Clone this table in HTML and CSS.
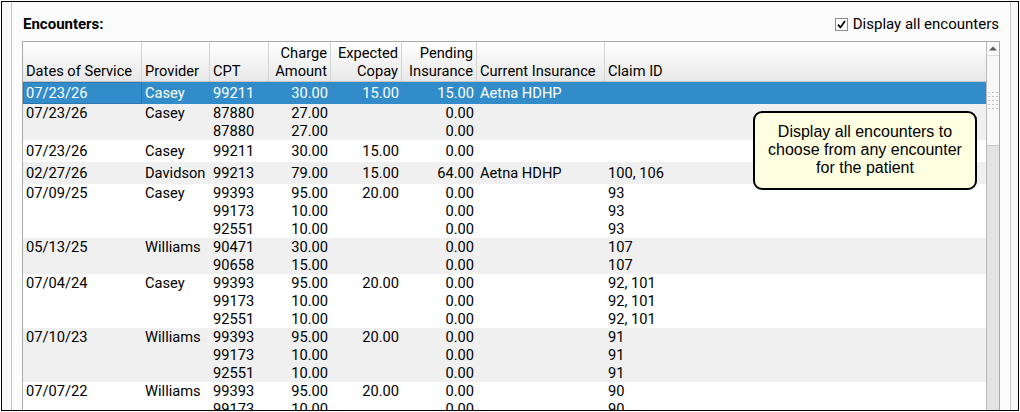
FILE: index.html
```html
<!DOCTYPE html>
<html>
<head>
<meta charset="utf-8">
<link rel="stylesheet" href="styles.css">
</head>
<body>
<div class="frame">
  <div class="gutter-left"></div>
  <div class="panel">
    <div class="toolbar">
      <span class="title">Encounters:</span>
      <label class="check">
        <span class="box"><svg width="11" height="11" viewBox="0 0 11 11"><path d="M2 5.6 L4.4 8.4 L9 2" fill="none" stroke="#000" stroke-width="1.7"/></svg></span>
        <span>Display all encounters</span>
      </label>
    </div>
    <div class="table">
      <div class="grid">
        <div class="head">
          <div class="hc">Dates of Service</div>
          <div class="hc">Provider</div>
          <div class="hc">CPT</div>
          <div class="hc r">Charge<br>Amount</div>
          <div class="hc r">Expected<br>Copay</div>
          <div class="hc r">Pending<br>Insurance</div>
          <div class="hc">Current Insurance</div>
          <div class="hc last">Claim ID</div>
          <div class="hc last"></div>
        </div>
        <div class="body">
          <div class="row one sel">
            <div class="c focus">07/23/26</div><div class="c">Casey</div><div class="c">99211</div><div class="c r">30.00</div><div class="c r">15.00</div><div class="c r">15.00</div><div class="c">Aetna HDHP</div><div class="c"></div><div class="c"></div>
          </div>
          <div class="row">
            <div class="c">07/23/26</div><div class="c">Casey</div><div class="c">87880<br>87880</div><div class="c r">27.00<br>27.00</div><div class="c r"></div><div class="c r">0.00<br>0.00</div><div class="c"></div><div class="c"></div><div class="c"></div>
          </div>
          <div class="row one">
            <div class="c">07/23/26</div><div class="c">Casey</div><div class="c">99211</div><div class="c r">30.00</div><div class="c r">15.00</div><div class="c r">0.00</div><div class="c"></div><div class="c"></div><div class="c"></div>
          </div>
          <div class="row one">
            <div class="c">02/27/26</div><div class="c">Davidson</div><div class="c">99213</div><div class="c r">79.00</div><div class="c r">15.00</div><div class="c r">64.00</div><div class="c">Aetna HDHP</div><div class="c">100, 106</div><div class="c"></div>
          </div>
          <div class="row">
            <div class="c">07/09/25</div><div class="c">Casey</div><div class="c">99393<br>99173<br>92551</div><div class="c r">95.00<br>10.00<br>10.00</div><div class="c r">20.00</div><div class="c r">0.00<br>0.00<br>0.00</div><div class="c"></div><div class="c">93<br>93<br>93</div><div class="c"></div>
          </div>
          <div class="row">
            <div class="c">05/13/25</div><div class="c">Williams</div><div class="c">90471<br>90658</div><div class="c r">30.00<br>15.00</div><div class="c r"></div><div class="c r">0.00<br>0.00</div><div class="c"></div><div class="c">107<br>107</div><div class="c"></div>
          </div>
          <div class="row">
            <div class="c">07/04/24</div><div class="c">Casey</div><div class="c">99393<br>99173<br>92551</div><div class="c r">95.00<br>10.00<br>10.00</div><div class="c r">20.00</div><div class="c r">0.00<br>0.00<br>0.00</div><div class="c"></div><div class="c">92, 101<br>92, 101<br>92, 101</div><div class="c"></div>
          </div>
          <div class="row">
            <div class="c">07/10/23</div><div class="c">Williams</div><div class="c">99393<br>99173<br>92551</div><div class="c r">95.00<br>10.00<br>10.00</div><div class="c r">20.00</div><div class="c r">0.00<br>0.00<br>0.00</div><div class="c"></div><div class="c">91<br>91<br>91</div><div class="c"></div>
          </div>
          <div class="row">
            <div class="c">07/07/22</div><div class="c">Williams</div><div class="c">99393<br>99173<br>92551</div><div class="c r">95.00<br>10.00<br>10.00</div><div class="c r">20.00</div><div class="c r">0.00<br>0.00<br>0.00</div><div class="c"></div><div class="c">90<br>90<br>90</div><div class="c"></div>
          </div>
        </div>
      </div>
      <div class="sb">
        <div class="sb-up"><svg width="8" height="5" viewBox="0 0 8 5"><path d="M0 4.5 L4 0.5 L8 4.5 Z" fill="#5a5a5a"/></svg></div>
        <div class="sb-thumb"><svg width="10" height="18" viewBox="0 0 10 18"><g fill="#c4c4c4"><rect x="0" y="0" width="2" height="1"/><rect x="4" y="0" width="2" height="1"/><rect x="8" y="0" width="2" height="1"/><rect x="0" y="4" width="2" height="1"/><rect x="4" y="4" width="2" height="1"/><rect x="8" y="4" width="2" height="1"/><rect x="0" y="8" width="2" height="1"/><rect x="4" y="8" width="2" height="1"/><rect x="8" y="8" width="2" height="1"/><rect x="0" y="12" width="2" height="1"/><rect x="4" y="12" width="2" height="1"/><rect x="8" y="12" width="2" height="1"/><rect x="0" y="16" width="2" height="1"/><rect x="4" y="16" width="2" height="1"/><rect x="8" y="16" width="2" height="1"/></g></svg></div>
        <div class="sb-track"></div>
      </div>
    </div>
    <div class="callout">Display all encounters to<br>choose from any encounter<br>for the patient</div>
  </div>
  <div class="gutter-right"></div>
</div>
</body>
</html>
```

FILE: styles.css
```css
* { box-sizing: border-box; }
html, body { margin: 0; padding: 0; background: #ffffff; }
body {
  width: 1020px;
  height: 412px;
  overflow: hidden;
  font-family: Roboto, "Noto Sans", sans-serif;
  font-size: 14.67px;
  color: #000;
}
.frame {
  margin: 1px 0 0 1px;
  width: 1018px;
  height: 410px;
  border: 1px solid #000;
  display: flex;
  overflow: hidden;
  background: #f8f8f8;
}
.gutter-left { width: 9px; flex: none; }
.gutter-right { width: 7px; flex: none; }
.panel {
  width: 1000px;
  flex: none;
  border-left: 1px solid #c4c4c4;
  border-right: 1px solid #c4c4c4;
  background: #fcfcfc;
  position: relative;
  display: flex;
  flex-direction: column;
  padding: 0 10px;
}
.toolbar {
  height: 39px;
  flex: none;
  display: flex;
  align-items: center;
  justify-content: space-between;
  padding: 5px 1px 0 1px;
}
.title { font-weight: 700; font-size: 15px; }
.check { display: flex; align-items: center; gap: 5px; font-size: 15px; }
.box {
  width: 13px;
  height: 13px;
  border: 1px solid #8c8c8c;
  background: #fff;
  display: flex;
  align-items: center;
  justify-content: center;
}
.table {
  flex: 1;
  min-height: 0;
  border: 1px solid #a9a9a9;
  border-bottom: none;
  display: flex;
  background: #fff;
}
.grid {
  flex: 1;
  min-width: 0;
  display: flex;
  flex-direction: column;
  overflow: hidden;
}
.head, .row {
  display: grid;
  grid-template-columns: 119px 68px 59px 62px 71px 75px 128px 1fr 0px;
}
.head {
  height: 40px;
  flex: none;
  background: linear-gradient(#ffffff, #e8e8e8);
  border-bottom: 1px solid #c6c6c6;
}
.hc {
  border-right: 1px solid #d3d3d3;
  padding: 0 3px 1px;
  display: flex;
  flex-direction: column;
  justify-content: flex-end;
  line-height: 18px;
  white-space: nowrap;
}
.hc.r { text-align: right; }
.hc.last { border-right: none; }
.row { line-height: 18px; }
.row.one { padding: 2px 0; }
.body .row:nth-child(even) { background: #f0f0f0; }
.row.sel { background: #318cc9; color: #fff; }
.c { padding: 0 3px; white-space: nowrap; }
.c.r { text-align: right; }
.c.focus { box-shadow: inset 0 0 0 1px #2a79b3; margin: -2px 0; padding-top: 2px; padding-bottom: 2px; }
.sb {
  width: 13px;
  flex: none;
  border-left: 1px solid #bababa;
  background: #e3e3e3;
  display: flex;
  flex-direction: column;
}
.sb-up {
  height: 14px;
  flex: none;
  background: #fafafa;
  border-bottom: 1px solid #dedede;
  display: flex;
  align-items: center;
  justify-content: center;
}
.sb-thumb {
  height: 90px;
  flex: none;
  background: #f8f8f8;
  border-bottom: 1px solid #c9c9c9;
  display: flex;
  align-items: center;
  justify-content: center;
}
.sb-track { flex: 1; }
.callout {
  position: absolute;
  left: 741px;
  top: 109px;
  width: 224px;
  height: 79px;
  border: 2px solid #000;
  border-radius: 9px;
  background: #fefee1;
  font-family: "Liberation Sans", Arial, sans-serif;
  font-size: 16px;
  line-height: 18px;
  text-align: center;
  padding-top: 10px;
  color: #000;
}
```
